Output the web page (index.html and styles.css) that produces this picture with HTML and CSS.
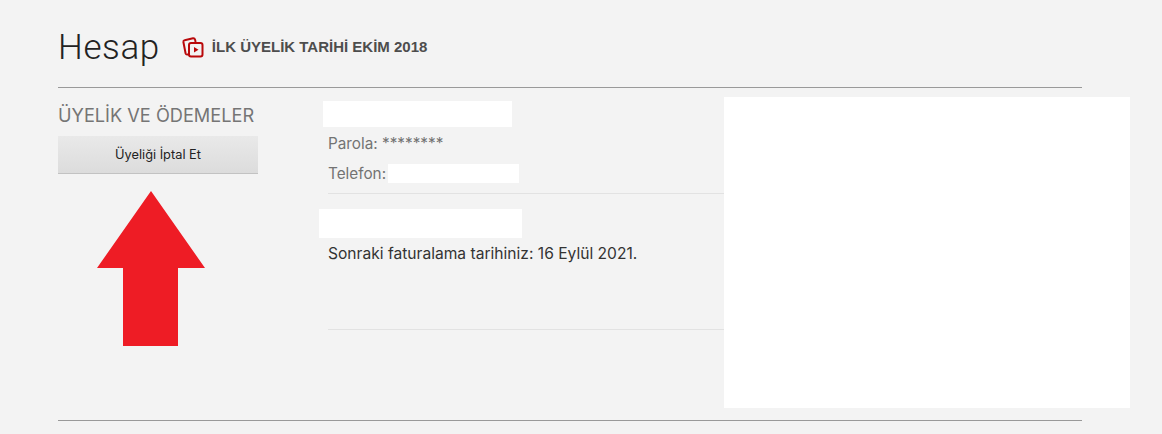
FILE: index.html
```html
<!DOCTYPE html>
<html lang="tr">
<head>
  <meta charset="UTF-8">
  <title>Hesap</title>
  <link rel="stylesheet" href="styles.css">
</head>
<body>
  <div class="account">
    <div class="account-header">
      <h1>Hesap</h1>
      <div class="member-since">
        <svg class="member-icon" width="22" height="24" viewBox="0 0 22 24" fill="none" stroke="#b9090b" stroke-width="2">
          <path d="M7.5 19.5 H5 Q4 19.5 3.6 18.5 L1.4 7 Q1.2 5.5 2.6 5.2 L11 3.2 Q12.6 3 13 4.4 L13.6 7"/>
          <rect x="7" y="8" width="13.5" height="13.5" rx="2"/>
          <path d="M12 12 L16.5 14.8 L12 17.5 Z" fill="#b9090b" stroke="none"/>
        </svg>
        <b>İLK ÜYELİK TARİHİ EKİM 2018</b>
      </div>
    </div>

    <div class="account-section">
      <div class="section-side">
        <h2>ÜYELİK VE ÖDEMELER</h2>
        <button type="button" class="cancel-btn">Üyeliği İptal Et</button>
        <svg class="arrow" width="108" height="155" viewBox="0 0 108 155">
          <polygon points="54,0 108,77 81,77 81,155 26,155 26,77 0,77" fill="#ee1c25"/>
        </svg>
      </div>

      <div class="section-main">
        <div class="info-block">
          <div class="mask mask-email"></div>
          <div class="info-row">Parola: ********</div>
          <div class="info-row info-phone">Telefon:<span class="mask mask-phone"></span></div>
        </div>
        <div class="info-block billing">
          <div class="mask mask-plan"></div>
          <div class="next-date">Sonraki faturalama tarihiniz: 16 Eylül 2021.</div>
        </div>
      </div>
    </div>
  </div>

  <!-- white box over the right part of the page -->
  <div class="side-cover"></div>
</body>
</html>
```

FILE: styles.css
```css
body {
  font-family: Inter, "Noto Sans", Arial, sans-serif;
  margin: 0;
  padding: 0;
  background-color: #f3f3f3;
  color: #333;
  position: relative;
  height: 434px;
  overflow: hidden;
}

.account {
  width: 1024px;
  margin-left: 58px;
}

.account-header {
  display: flex;
  align-items: center;
  height: 87px;
  border-bottom: 1px solid #999;
}

.account-header h1 {
  margin: 8px 0 0;
  font-family: Roboto, Arial, sans-serif;
  font-size: 35px;
  font-weight: 300;
  letter-spacing: 0.6px;
  color: #222;
}

.member-since {
  display: flex;
  align-items: center;
  margin: 6px 0 0 22px;
  font-family: "Liberation Sans", Arial, sans-serif;
  font-size: 15px;
  color: #4d4d4d;
}

.member-icon {
  margin-right: 8px;
}

.account-section {
  display: flex;
  height: 332px;
  border-bottom: 1px solid #999;
}

.section-side {
  width: 270px;
}

.section-side h2 {
  margin: 17px 0 0;
  font-size: 18.2px;
  font-weight: 400;
  line-height: 20px;
  color: #757575;
}

.cancel-btn {
  display: block;
  width: 200px;
  height: 37px;
  margin-top: 11px;
  padding: 0;
  border: none;
  background: linear-gradient(to bottom, #e9e9e9, #dcdcdc);
  box-shadow: 0 1px 0 rgba(0, 0, 0, 0.2);
  font-family: Inter, Arial, sans-serif;
  font-size: 12.8px;
  color: #222;
}

.arrow {
  display: block;
  margin: 18px 0 0 39px;
}

.section-main {
  flex: 1;
}

.info-block {
  border-bottom: 1px solid #e2e2e2;
}

.mask {
  background: #fff;
}

.mask-email {
  width: 189px;
  height: 26px;
  margin: 13px 0 0 -5px;
}

.info-row {
  font-size: 15.3px;
  line-height: 20px;
  color: #737373;
}

.info-block .info-row:nth-child(2) {
  margin-top: 7px;
}

.info-phone {
  display: flex;
  margin-top: 10px;
  padding-bottom: 9px;
}

.mask-phone {
  display: block;
  width: 131px;
  height: 19px;
  margin-left: 2px;
}

.billing {
  height: 120px;
}

.mask-plan {
  width: 203px;
  height: 29px;
  margin: 15px 0 0 -9px;
}

.next-date {
  margin-top: 6px;
  font-size: 15.6px;
  line-height: 20px;
  color: #333;
}

.side-cover {
  position: absolute;
  left: 724px;
  top: 97px;
  width: 406px;
  height: 311px;
  background: #fff;
}
```
